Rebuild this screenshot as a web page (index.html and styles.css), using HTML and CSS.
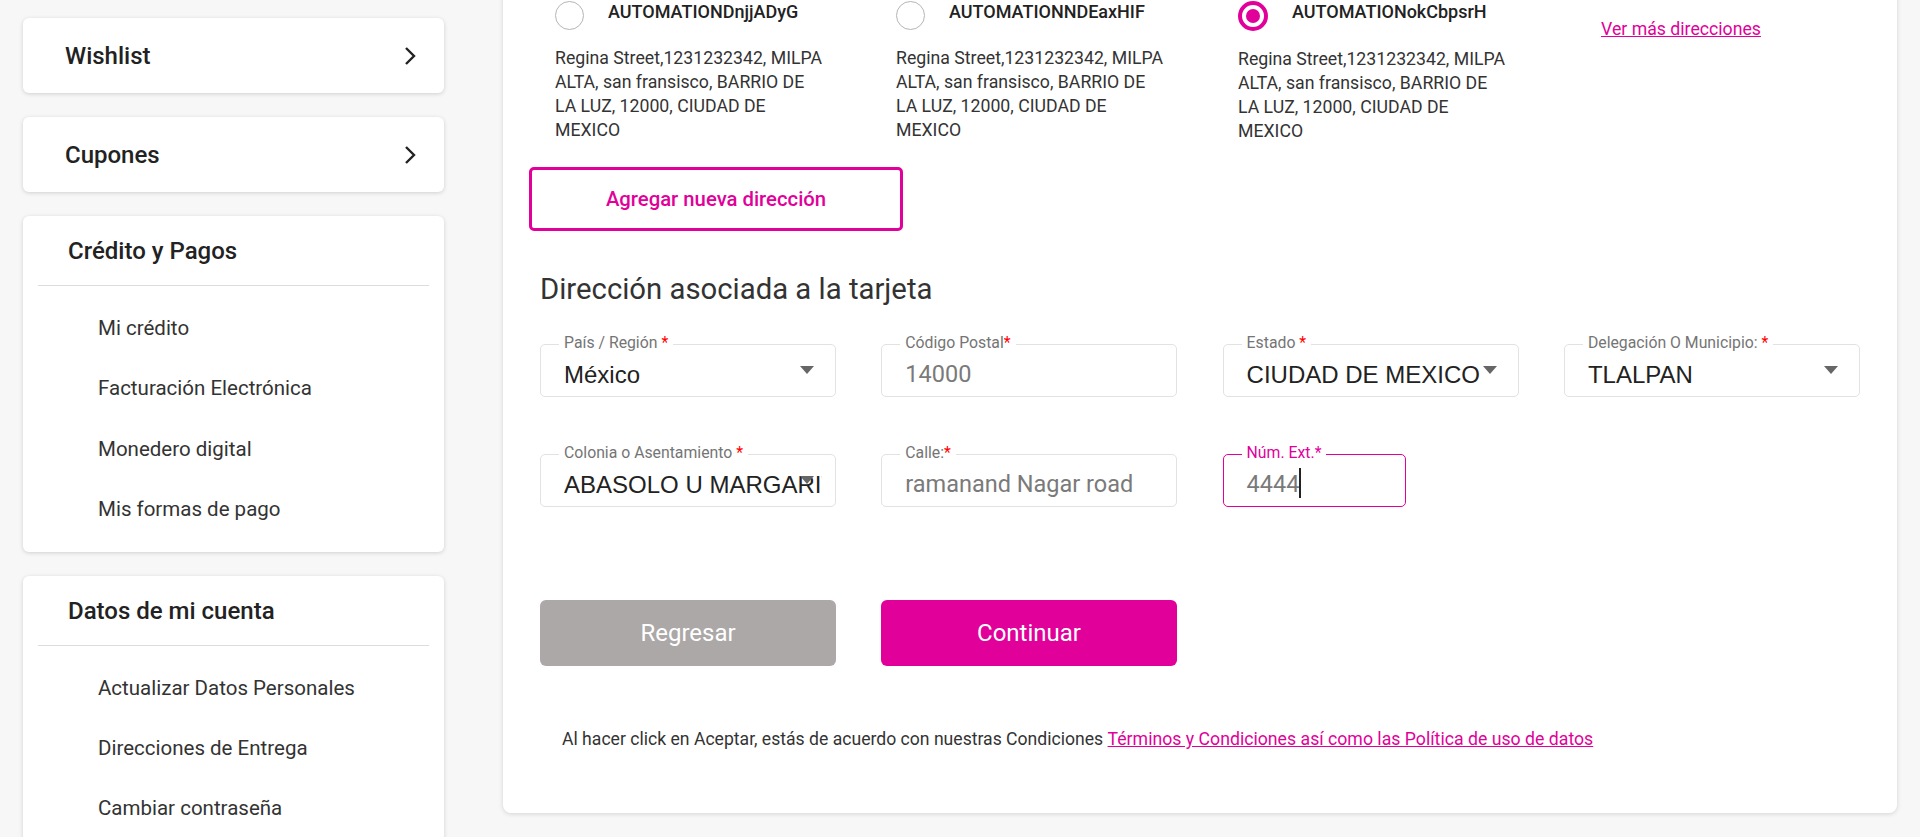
FILE: index.html
```html
<!DOCTYPE html>
<html lang="es">
<head>
<meta charset="utf-8">
<title>Dirección asociada a la tarjeta</title>
<link rel="stylesheet" href="styles.css">
</head>
<body>
<div class="page">
  <aside class="sidebar">
    <a class="card card-link">
      <span>Wishlist</span>
      <svg class="chev" width="12" height="20" viewBox="0 0 12 20"><path d="M2 2 L10 10 L2 18" fill="none" stroke="#222" stroke-width="2.4"/></svg>
    </a>
    <a class="card card-link">
      <span>Cupones</span>
      <svg class="chev" width="12" height="20" viewBox="0 0 12 20"><path d="M2 2 L10 10 L2 18" fill="none" stroke="#222" stroke-width="2.4"/></svg>
    </a>
    <div class="card card-menu">
      <div class="menu-title">Crédito y Pagos</div>
      <ul class="menu-list">
        <li>Mi crédito</li>
        <li>Facturación Electrónica</li>
        <li>Monedero digital</li>
        <li>Mis formas de pago</li>
      </ul>
    </div>
    <div class="card card-menu">
      <div class="menu-title">Datos de mi cuenta</div>
      <ul class="menu-list">
        <li>Actualizar Datos Personales</li>
        <li>Direcciones de Entrega</li>
        <li>Cambiar contraseña</li>
      </ul>
    </div>
  </aside>

  <main class="panel">
    <div class="addresses">
      <div class="addr">
        <div class="addr-head"><span class="radio"></span><span class="addr-name">AUTOMATIONDnjjADyG</span></div>
        <p class="addr-text">Regina Street,1231232342, MILPA ALTA, san fransisco, BARRIO DE LA LUZ, 12000, CIUDAD DE MEXICO</p>
      </div>
      <div class="addr">
        <div class="addr-head"><span class="radio"></span><span class="addr-name">AUTOMATIONNDEaxHIF</span></div>
        <p class="addr-text">Regina Street,1231232342, MILPA ALTA, san fransisco, BARRIO DE LA LUZ, 12000, CIUDAD DE MEXICO</p>
      </div>
      <div class="addr">
        <div class="addr-head"><span class="radio radio-on"></span><span class="addr-name">AUTOMATIONokCbpsrH</span></div>
        <p class="addr-text">Regina Street,1231232342, MILPA ALTA, san fransisco, BARRIO DE LA LUZ, 12000, CIUDAD DE MEXICO</p>
      </div>
      <div class="addr-more"><a class="link">Ver más direcciones</a></div>
    </div>

    <button class="btn-outline">Agregar nueva dirección</button>

    <h2 class="section-title">Dirección asociada a la tarjeta</h2>

    <div class="fields">
      <div class="field">
        <label class="field-label">País / Región <b>*</b></label>
        <div class="field-value select">México</div>
        <span class="caret"></span>
      </div>
      <div class="field">
        <label class="field-label">Código Postal<b>*</b></label>
        <div class="field-value muted">14000</div>
      </div>
      <div class="field">
        <label class="field-label">Estado <b>*</b></label>
        <div class="field-value select">CIUDAD DE MEXICO</div>
        <span class="caret"></span>
      </div>
      <div class="field">
        <label class="field-label">Delegación O Municipio: <b>*</b></label>
        <div class="field-value select">TLALPAN</div>
        <span class="caret"></span>
      </div>
      <div class="field">
        <label class="field-label">Colonia o Asentamiento <b>*</b></label>
        <div class="field-value select">ABASOLO U MARGARITA MAZA DE JUAREZ</div>
        <span class="caret"></span>
      </div>
      <div class="field">
        <label class="field-label">Calle:<b>*</b></label>
        <div class="field-value muted">ramanand Nagar road</div>
      </div>
      <div class="field field-focus">
        <label class="field-label">Núm. Ext.<b>*</b></label>
        <div class="field-value muted">4444<span class="cursor"></span></div>
      </div>
    </div>

    <div class="actions">
      <button class="btn btn-grey">Regresar</button>
      <button class="btn btn-pink">Continuar</button>
    </div>

    <p class="terms">Al hacer click en Aceptar, estás de acuerdo con nuestras Condiciones <a class="link">Términos y Condiciones así como las Política de uso de datos</a></p>
  </main>
</div>
</body>
</html>
```

FILE: styles.css
```css
html, body {
  margin: 0;
  padding: 0;
  height: 100%;
  overflow: hidden;
  background: #f7f7f7;
  font-family: Roboto, "Liberation Sans", Arial, sans-serif;
  color: #333;
}

.page {
  display: flex;
  align-items: flex-start;
}

/* Sidebar */
.sidebar {
  width: 421px;
  padding: 18px 0 0 23px;
  display: flex;
  flex-direction: column;
  gap: 24px;
  flex-shrink: 0;
}

.card {
  background: #fff;
  border-radius: 6px;
  box-shadow: 0 1px 4px rgba(0, 0, 0, 0.16);
}

.card-link {
  height: 75px;
  display: flex;
  align-items: center;
  justify-content: space-between;
  padding: 0 28px 0 42px;
  font-size: 24px;
  font-weight: 500;
  color: #222;
}

.chev { display: block; margin-top: 1px; }

.card-menu {
  padding: 0 15px 12px;
}

.menu-title {
  font-size: 24px;
  font-weight: 500;
  color: #222;
  line-height: 28px;
  padding: 21px 0 20px 30px;
  border-bottom: 1px solid #dcdcdc;
}

.menu-list {
  list-style: none;
  margin: 0;
  padding: 12px 0 0 60px;
}

.menu-list li {
  font-size: 20.5px;
  line-height: 60.4px;
  color: #333;
}

/* Main panel */
.panel {
  margin: -20px 0 0 59px;
  width: 1394px;
  box-sizing: border-box;
  background: #fff;
  border-radius: 8px;
  box-shadow: 0 1px 5px rgba(0, 0, 0, 0.14);
  padding: 21px 38px 63.5px 37px;
}

.addresses {
  display: grid;
  grid-template-columns: 341px 342px 341px 1fr;
  padding-left: 15px;
}

.addr-head {
  display: flex;
  align-items: flex-start;
  gap: 24px;
}

.radio {
  width: 29px;
  height: 29px;
  box-sizing: border-box;
  border: 1px solid #b5b5b5;
  border-radius: 50%;
  flex-shrink: 0;
  position: relative;
}

.radio-on {
  border: 4px solid #e1009a;
  width: 30px;
  height: 30px;
}

.radio-on::after {
  content: "";
  position: absolute;
  left: 4px;
  top: 4px;
  width: 14px;
  height: 14px;
  border-radius: 50%;
  background: #e1009a;
}

.addr-name {
  font-size: 18px;
  font-weight: 500;
  color: #222;
  line-height: 22px;
  margin-top: 0;
}

.addr-text {
  margin: 16px 0 0;
  width: 270px;
  font-size: 17.7px;
  line-height: 24.1px;
  color: #333;
}

.addr-more {
  padding: 18px 0 0 22px;
}

.link {
  color: #e1009a;
  text-decoration: underline;
  font-size: 17.7px;
}

.btn-outline {
  display: block;
  margin: 24px 0 0 -11px;
  width: 374px;
  height: 64px;
  border: 3px solid #e1009a;
  border-radius: 5px;
  background: #fff;
  color: #e1009a;
  font-family: inherit;
  font-size: 20.3px;
  font-weight: 500;
}

.section-title {
  margin: 41px 0 0;
  font-size: 29.3px;
  font-weight: 400;
  line-height: 34px;
  color: #333;
}

.fields {
  display: grid;
  grid-template-columns: repeat(4, 296px);
  column-gap: 45.3px;
  row-gap: 57px;
  margin-top: 38px;
}

.field {
  position: relative;
  height: 53px;
  box-sizing: border-box;
  border: 1px solid #e2e2e2;
  border-radius: 5px;
}

.field-focus {
  width: 183px;
  border-color: #e1009a;
}

.field-label {
  position: absolute;
  left: 18px;
  top: -11px;
  padding: 0 5px;
  background: #fff;
  font-size: 15.8px;
  line-height: 17px;
  color: #757575;
}

.field-label b {
  color: #f00;
  font-weight: 400;
}

.field-focus .field-label { color: #e1009a; }
.field-focus .field-label b { color: #e1009a; }

.field-value {
  margin-right: 13px;
  padding: 7px 0 0 23px;
  line-height: 45px;
  font-size: 23.5px;
  color: #222;
  white-space: nowrap;
  overflow: hidden;
}

.field-value.select {
  font-family: "Liberation Sans", Arial, sans-serif;
  font-size: 24px;
}

.field-value.muted { color: #7a7a7a; }

.cursor {
  display: inline-block;
  width: 2px;
  height: 30px;
  background: #222;
  vertical-align: -6px;
}

.caret {
  position: absolute;
  right: 21px;
  top: 21px;
  width: 0;
  height: 0;
  border-left: 7.5px solid transparent;
  border-right: 7.5px solid transparent;
  border-top: 8px solid #666;
}

.actions {
  display: flex;
  gap: 45px;
  margin-top: 93px;
}

.btn {
  width: 296px;
  height: 66px;
  border: 0;
  border-radius: 6px;
  color: #fff;
  font-family: inherit;
  font-size: 24px;
  font-weight: 400;
}

.btn-grey { background: #aba8a7; }
.btn-pink { background: #e1009a; }

.terms {
  margin: 63px 0 0 22px;
  font-size: 17.6px;
  line-height: 20px;
  color: #333;
}
```
